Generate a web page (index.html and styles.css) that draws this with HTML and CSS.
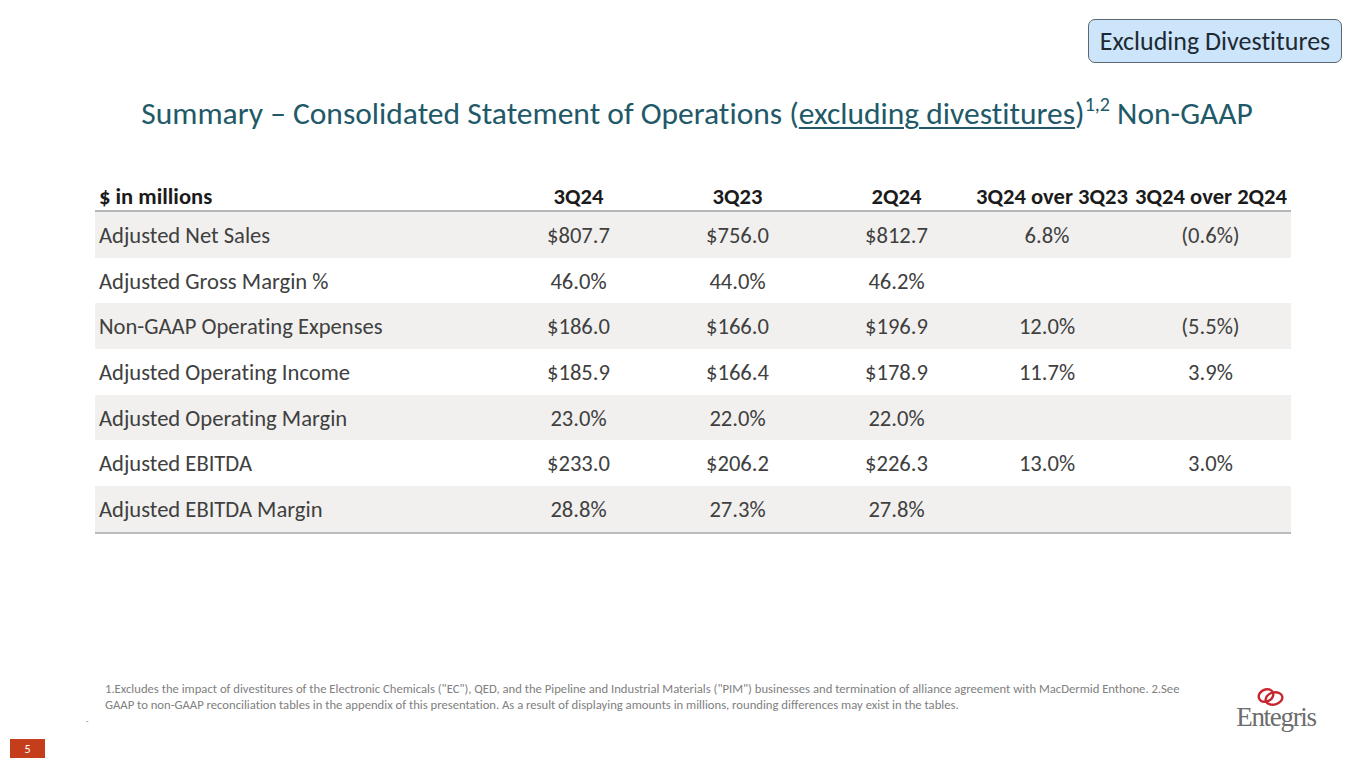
FILE: index.html
```html
<!DOCTYPE html>
<html>
<head>
<meta charset="utf-8">
<link rel="stylesheet" href="styles.css">
</head>
<body>
<div class="slide">
  <div class="topbar">
    <div class="badge">Excluding Divestitures</div>
  </div>
  <h1 class="title">Summary – Consolidated Statement of Operations (<span class="ul">excluding divestitures</span>)<sup>1,2</sup> Non-GAAP</h1>
  <table class="fin">
    <colgroup>
      <col class="c-lbl"><col class="c-q"><col class="c-q"><col class="c-q"><col class="c-p1"><col class="c-p2">
    </colgroup>
    <thead>
      <tr><th class="lbl">$ in millions</th><th>3Q24</th><th>3Q23</th><th>2Q24</th><th>3Q24 over 3Q23</th><th class="last">3Q24 over 2Q24</th></tr>
    </thead>
    <tbody>
      <tr class="sh"><td class="lbl">Adjusted Net Sales</td><td>$807.7</td><td>$756.0</td><td>$812.7</td><td>6.8%</td><td class="c6">(0.6%)</td></tr>
      <tr><td class="lbl">Adjusted Gross Margin %</td><td>46.0%</td><td>44.0%</td><td>46.2%</td><td></td><td class="c6"></td></tr>
      <tr class="sh"><td class="lbl">Non-GAAP Operating Expenses</td><td>$186.0</td><td>$166.0</td><td>$196.9</td><td>12.0%</td><td class="c6">(5.5%)</td></tr>
      <tr><td class="lbl">Adjusted Operating Income</td><td>$185.9</td><td>$166.4</td><td>$178.9</td><td>11.7%</td><td class="c6">3.9%</td></tr>
      <tr class="sh"><td class="lbl">Adjusted Operating Margin</td><td>23.0%</td><td>22.0%</td><td>22.0%</td><td></td><td class="c6"></td></tr>
      <tr><td class="lbl">Adjusted EBITDA</td><td>$233.0</td><td>$206.2</td><td>$226.3</td><td>13.0%</td><td class="c6">3.0%</td></tr>
      <tr class="sh"><td class="lbl">Adjusted EBITDA Margin</td><td>28.8%</td><td>27.3%</td><td>27.8%</td><td></td><td class="c6"></td></tr>
    </tbody>
  </table>
  <div class="bottom">
    <div class="notes">
      <p class="foot">1.Excludes the impact of divestitures of the Electronic Chemicals ("EC"), QED, and the Pipeline and Industrial Materials ("PIM") businesses and termination of alliance agreement with MacDermid Enthone. 2.See GAAP to non-GAAP reconciliation tables in the appendix of this presentation. As a result of displaying amounts in millions, rounding differences may exist in the tables.</p>
      <span class="dash">-</span>
      <div class="pagenum">5</div>
    </div>
    <div class="logo">
      <svg class="rings" width="30" height="20" viewBox="0 0 30 20">
        <ellipse cx="10" cy="8.5" rx="7.5" ry="6" fill="none" stroke="#c8262e" stroke-width="2.4" transform="rotate(-25 10 8.5)"/>
        <ellipse cx="18" cy="11.5" rx="8.5" ry="6" fill="none" stroke="#c8262e" stroke-width="2.4" transform="rotate(-15 18 11.5)"/>
      </svg>
      <span class="brand">Entegris</span>
    </div>
  </div>
</div>
</body>
</html>
```
FILE: styles.css
```css
html, body {
  margin: 0;
  padding: 0;
  background: #ffffff;
}
body {
  font-family: "Carlito", "Open Sans", "Liberation Sans", sans-serif;
  font-variant-ligatures: no-common-ligatures;
}
.slide {
  width: 1365px;
  height: 768px;
  display: flex;
  flex-direction: column;
  box-sizing: border-box;
  overflow: hidden;
}
.topbar {
  display: flex;
  justify-content: flex-end;
  padding: 19px 23px 0 0;
}
.badge {
  background: #cde5fb;
  border: 1px solid #5a6670;
  border-radius: 7px;
  height: 44px;
  width: 254px;
  box-sizing: border-box;
  display: flex;
  align-items: center;
  justify-content: center;
  font-size: 26px;
  color: #1e2a33;
}
.title {
  margin: 31px 0 0 0;
  text-align: center;
  font-weight: normal;
  font-size: 31.5px;
  color: #215968;
  padding-left: 29px;
  line-height: 38px;
}
.title .ul {
  text-decoration: underline;
  text-decoration-thickness: 1.5px;
  text-underline-offset: 3px;
}
.title sup {
  font-size: 20px;
  line-height: 0;
  vertical-align: 13px;
}
.fin {
  margin: 50px 0 0 95px;
  width: 1196px;
  table-layout: fixed;
  border-collapse: collapse;
  font-size: 22.6px;
  color: #404040;
}
.c-lbl { width: 404px; }
.c-q { width: 159px; }
.c-p1 { width: 142px; }
.c-p2 { width: 173px; }
.fin th {
  font-weight: bold;
  color: #1b1b1b;
  height: 27px;
  padding: 0;
  border-bottom: 2px solid #b7b7b7;
  text-align: center;
  white-space: nowrap;
}
.fin td {
  text-align: center;
  height: 45.7px;
  padding: 0;
  white-space: nowrap;
}
.fin .lbl {
  text-align: left;
  padding-left: 4px;
}
.fin th.last { text-align: right; padding-right: 4px; }
.fin td.c6 { padding-left: 12px; }
.fin tr.sh td { background: #f1f0ef; }
.fin tbody tr:last-child td { border-bottom: 2px solid #bcbcbc; }
.bottom {
  margin-top: auto;
  display: flex;
  align-items: flex-start;
  padding-bottom: 10px;
}
.notes {
  flex: 1;
  display: flex;
  flex-direction: column;
}
.foot {
  margin: 0 0 0 105px;
  width: 1092px;
  font-size: 12.66px;
  line-height: 16px;
  color: #808080;
}
.dash {
  margin: 4px 0 0 86px;
  font-size: 8px;
  line-height: 8px;
  color: #666;
}
.pagenum {
  margin: 14px 0 0 10px;
  width: 35px;
  height: 19px;
  background: #c43e1c;
  color: #fff;
  font-size: 12px;
  display: flex;
  align-items: center;
  justify-content: center;
}
.logo {
  width: 100px;
  margin-right: 39px;
  margin-top: 6px;
  display: flex;
  flex-direction: column;
  align-items: center;
}
.rings {
  display: block;
  margin-right: 10px;
}
.brand {
  font-family: "Liberation Serif", serif;
  font-size: 27px;
  line-height: 26px;
  color: #6d6d6d;
  letter-spacing: -1.3px;
  margin-top: -3px;
}
```
